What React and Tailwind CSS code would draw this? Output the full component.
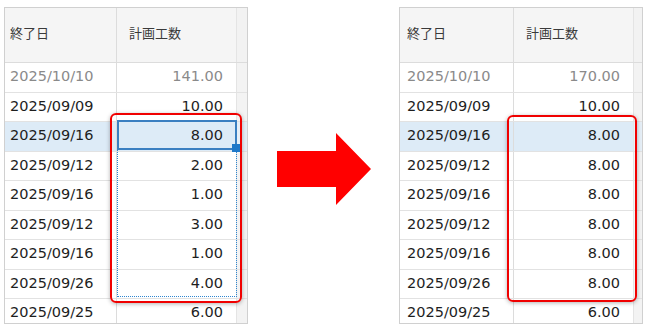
import React from 'react';

const leftRows = [
  { date: '2025/10/10', hours: '141.00', muted: true },
  { date: '2025/09/09', hours: '10.00' },
  { date: '2025/09/16', hours: '8.00', active: true },
  { date: '2025/09/12', hours: '2.00' },
  { date: '2025/09/16', hours: '1.00' },
  { date: '2025/09/12', hours: '3.00' },
  { date: '2025/09/16', hours: '1.00' },
  { date: '2025/09/26', hours: '4.00' },
  { date: '2025/09/25', hours: '6.00' },
];

const rightRows = [
  { date: '2025/10/10', hours: '170.00', muted: true },
  { date: '2025/09/09', hours: '10.00' },
  { date: '2025/09/16', hours: '8.00', active: true },
  { date: '2025/09/12', hours: '8.00' },
  { date: '2025/09/16', hours: '8.00' },
  { date: '2025/09/12', hours: '8.00' },
  { date: '2025/09/16', hours: '8.00' },
  { date: '2025/09/26', hours: '8.00' },
  { date: '2025/09/25', hours: '6.00' },
];

const Grid = ({ rows, dateWidth, datePad, children }) => {
  return (
    <div className="relative w-[244px] h-[317px] shrink-0">
      <div className="w-full h-full border border-[#d0d0d0] overflow-hidden bg-white">
        {/* Header */}
        <div className="flex h-[55px] border-b border-[#dcdcdc] bg-[#f5f5f5] text-[13px] text-[#3a3a3a] font-['Noto_Sans_CJK_JP',sans-serif]">
          <div className={`${dateWidth} ${datePad} flex items-center border-r border-[#dcdcdc] pb-1`}>
            終了日
          </div>
          <div className="w-[120px] flex items-center pl-[12px] border-r border-[#e4e4e4] pb-1">
            計画工数
          </div>
          <div className="flex-1 bg-[#f2f2f2]"></div>
        </div>

        {/* Rows */}
        {rows.map((row, i) => (
          <div
            key={i}
            className={`flex h-[29.5px] border-b border-[#e2e2e2] text-[14.5px] font-['DejaVu_Sans',sans-serif] ${
              row.muted ? 'text-[#8a8a8a]' : 'text-[#1e1e1e]'
            } ${row.active ? 'bg-[#ddebf7]' : 'bg-white'}`}
          >
            <div className={`${dateWidth} ${datePad} flex items-center border-r border-[#dcdcdc]`}>
              {row.date}
            </div>
            <div className="w-[120px] flex items-center justify-end pr-[13px] border-r border-[#e4e4e4]">
              {row.hours}
            </div>
            <div className={`flex-1 ${row.active ? 'bg-[#e6eff7]' : 'bg-[#f3f3f3]'}`}></div>
          </div>
        ))}
      </div>
      {children}
    </div>
  );
};

const Arrow = () => (
  <svg width="94" height="72" viewBox="0 0 94 72" className="ml-[29px] mt-[126px] shrink-0">
    <polygon points="0,18 59,18 59,0 94,36 59,72 59,54 0,54" fill="#ff0000" />
  </svg>
);

export default function App() {
  return (
    <div className="w-[648px] h-[332px] bg-white flex items-start pt-[7px] pl-[4px] overflow-hidden">
      <Grid rows={leftRows} dateWidth="w-[112px]" datePad="pl-[5px]">
        {/* copy range (dotted) */}
        <div className="absolute left-[113px] top-[113px] w-[120px] h-[177px] border border-dotted border-[#2f86d0]"></div>
        {/* active cell */}
        <div className="absolute left-[113px] top-[113px] w-[120px] h-[30px] border-2 border-[#3a7fc1]"></div>
        {/* fill handle */}
        <div className="absolute left-[228px] top-[137px] w-[8px] h-[8px] bg-[#1f78c8]"></div>
        {/* highlight */}
        <div className="absolute left-[106px] top-[106px] w-[132px] h-[190px] border-2 border-[#f00000] rounded-[6px] shadow-[0_1px_4px_rgba(0,0,0,0.3)]"></div>
      </Grid>

      <div className="w-[151px] shrink-0 flex">
        <Arrow />
      </div>

      <Grid rows={rightRows} dateWidth="w-[114px]" datePad="pl-[7px]">
        <div className="absolute left-[108px] top-[108px] w-[130px] h-[187px] border-2 border-[#f00000] rounded-[6px] shadow-[0_1px_4px_rgba(0,0,0,0.3)]"></div>
      </Grid>
    </div>
  );
}
